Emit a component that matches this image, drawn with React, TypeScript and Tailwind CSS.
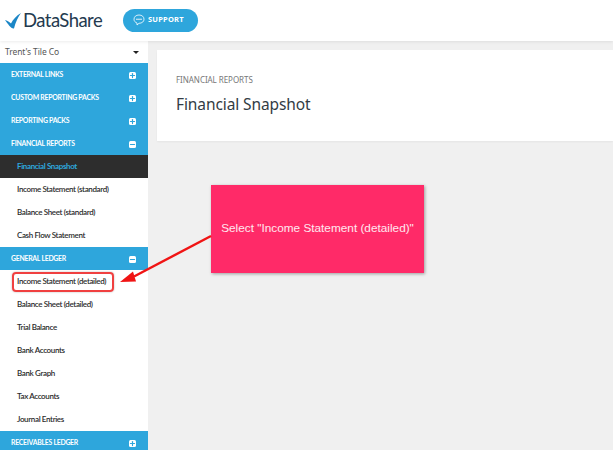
import React from 'react';
import { Plus, Minus } from 'lucide-react';

type Row = { label: string; kind: 'head' | 'open' | 'active' | 'item' };

const rows: Row[] = [
  { label: 'EXTERNAL LINKS', kind: 'head' },
  { label: 'CUSTOM REPORTING PACKS', kind: 'head' },
  { label: 'REPORTING PACKS', kind: 'head' },
  { label: 'FINANCIAL REPORTS', kind: 'open' },
  { label: 'Financial Snapshot', kind: 'active' },
  { label: 'Income Statement (standard)', kind: 'item' },
  { label: 'Balance Sheet (standard)', kind: 'item' },
  { label: 'Cash Flow Statement', kind: 'item' },
  { label: 'GENERAL LEDGER', kind: 'open' },
  { label: 'Income Statement (detailed)', kind: 'item' },
  { label: 'Balance Sheet (detailed)', kind: 'item' },
  { label: 'Trial Balance', kind: 'item' },
  { label: 'Bank Accounts', kind: 'item' },
  { label: 'Bank Graph', kind: 'item' },
  { label: 'Tax Accounts', kind: 'item' },
  { label: 'Journal Entries', kind: 'item' },
  { label: 'RECEIVABLES LEDGER', kind: 'head' },
];

function SideRow({ row }: { row: Row }) {
  if (row.kind === 'head' || row.kind === 'open') {
    return (
      <div className="h-[23px] shrink-0 bg-[#2ea6dc] flex items-center justify-between pl-[11px] pr-[12px]">
        <span className="font-['Lato',sans-serif] text-[8px] font-bold tracking-[-0.3px] text-white -mt-[1px] origin-left scale-x-[0.86]">{row.label}</span>
        <span className="w-[7px] h-[7px] mt-[1px] bg-white rounded-[1.5px] flex items-center justify-center text-[#2ea6dc]">
          {row.kind === 'head' ? <Plus size={7} strokeWidth={4} /> : <Minus size={7} strokeWidth={4} />}
        </span>
      </div>
    );
  }
  if (row.kind === 'active') {
    return (
      <div className="h-[23px] shrink-0 bg-[#2d2d2d] flex items-center pl-[17px]">
        <span className="font-['Lato',sans-serif] text-[8px] font-bold tracking-[-0.36px] text-[#2ea6dc] -mt-[1px]">{row.label}</span>
      </div>
    );
  }
  return (
    <div className="h-[23px] shrink-0 bg-white flex items-center pl-[17px]">
      <span className="font-['Lato',sans-serif] text-[8px] font-semibold tracking-[-0.36px] text-[#2b2b2b] -mt-[1px]">{row.label}</span>
    </div>
  );
}

export default function App() {
  return (
    <div className="relative w-[613px] h-[450px] overflow-hidden bg-[#f0f0f0] font-['Noto_Sans',sans-serif]">
      <header className="h-[41px] bg-white flex items-center shadow-[0_1px_3px_rgba(0,0,0,0.08)] relative z-10">
        <div className="flex items-center ml-[5px] w-[118px]">
          <svg width="17" height="16" viewBox="0 0 17 16" className="shrink-0">
            <path d="M0 7 C2 7.5 4 8.5 6 10.5 C8 6.5 11 3 16 0 C13 4 10.5 9.5 9 15.5 C6 16 3 11 0 7Z" fill="#1b86c6" />
          </svg>
          <span className="font-['Lato',sans-serif] text-[18.5px] leading-none tracking-[-0.55px] text-[#243a4f] ml-[1px]">DataShare</span>
        </div>
        <div className="w-[75px] h-[23px] rounded-full bg-[#2ea6dc] flex items-center pl-[10px] gap-[3px] -mt-[1px]">
          <svg width="12" height="12" viewBox="0 0 12 12" fill="none" stroke="white" strokeWidth="0.8">
            <path d="M6 1 C9 1 11 2.8 11 5.2 C11 7.6 9 9.3 6 9.3 L4 11 L4 9 C2.2 8.4 1 7 1 5.2 C1 2.8 3 1 6 1Z" />
            <circle cx="4" cy="5.2" r="0.4" fill="white" />
            <circle cx="6" cy="5.2" r="0.4" fill="white" />
            <circle cx="8" cy="5.2" r="0.4" fill="white" />
          </svg>
          <span className="text-[7.5px] font-bold tracking-[0.2px] text-white">SUPPORT</span>
        </div>
      </header>

      <div className="flex h-[409px]">
        <aside className="w-[148px] shrink-0 flex flex-col bg-white">
          <div className="h-[22px] shrink-0 flex items-center justify-between pl-[5px] pr-[9px]">
            <span className="text-[8.5px] tracking-[-0.1px] text-[#555]">Trent's Tile Co</span>
            <span className="w-0 h-0 border-x-[3px] border-x-transparent border-t-[3px] border-t-[#222]" />
          </div>
          {rows.map((row) => (
            <SideRow key={row.label} row={row} />
          ))}
        </aside>

        <main className="flex-1 pt-[9px] pl-[9px]">
          <div className="h-[91px] bg-white shadow-[0_1px_2px_rgba(0,0,0,0.05)] pl-[19px] pt-[24px]">
            <div className="text-[8px] leading-[12px] tracking-[-0.05px] text-[#777]">FINANCIAL REPORTS</div>
            <h1 className="mt-[7px] text-[15.5px] leading-[22px] tracking-[-0.1px] text-[#333c44]">Financial Snapshot</h1>
          </div>
        </main>
      </div>

      <div className="absolute left-[211px] top-[185px] w-[213px] h-[88px] bg-[#ff2a68] shadow-[1px_1px_3px_rgba(0,0,0,0.35)] flex items-center justify-center pb-[1px]">
        <span className="font-['Liberation_Sans',sans-serif] text-[11.8px] leading-none text-white/90 whitespace-nowrap">
          Select "Income Statement (detailed)"
        </span>
      </div>

      <div className="absolute left-[12px] top-[272px] w-[102px] h-[20px] rounded-[4px] border-2 border-[#f04040] shadow-[0_0_2px_rgba(0,0,0,0.3)]" />

      <svg className="absolute left-[115px] top-[230px]" width="100" height="60" viewBox="0 0 100 60">
        <path d="M96 6 L19 46.5" stroke="#f01414" strokeWidth="2.4" fill="none" />
        <path d="M5 52 L18 41.5 L21 51.5 Z" fill="#f01414" />
      </svg>
    </div>
  );
}
